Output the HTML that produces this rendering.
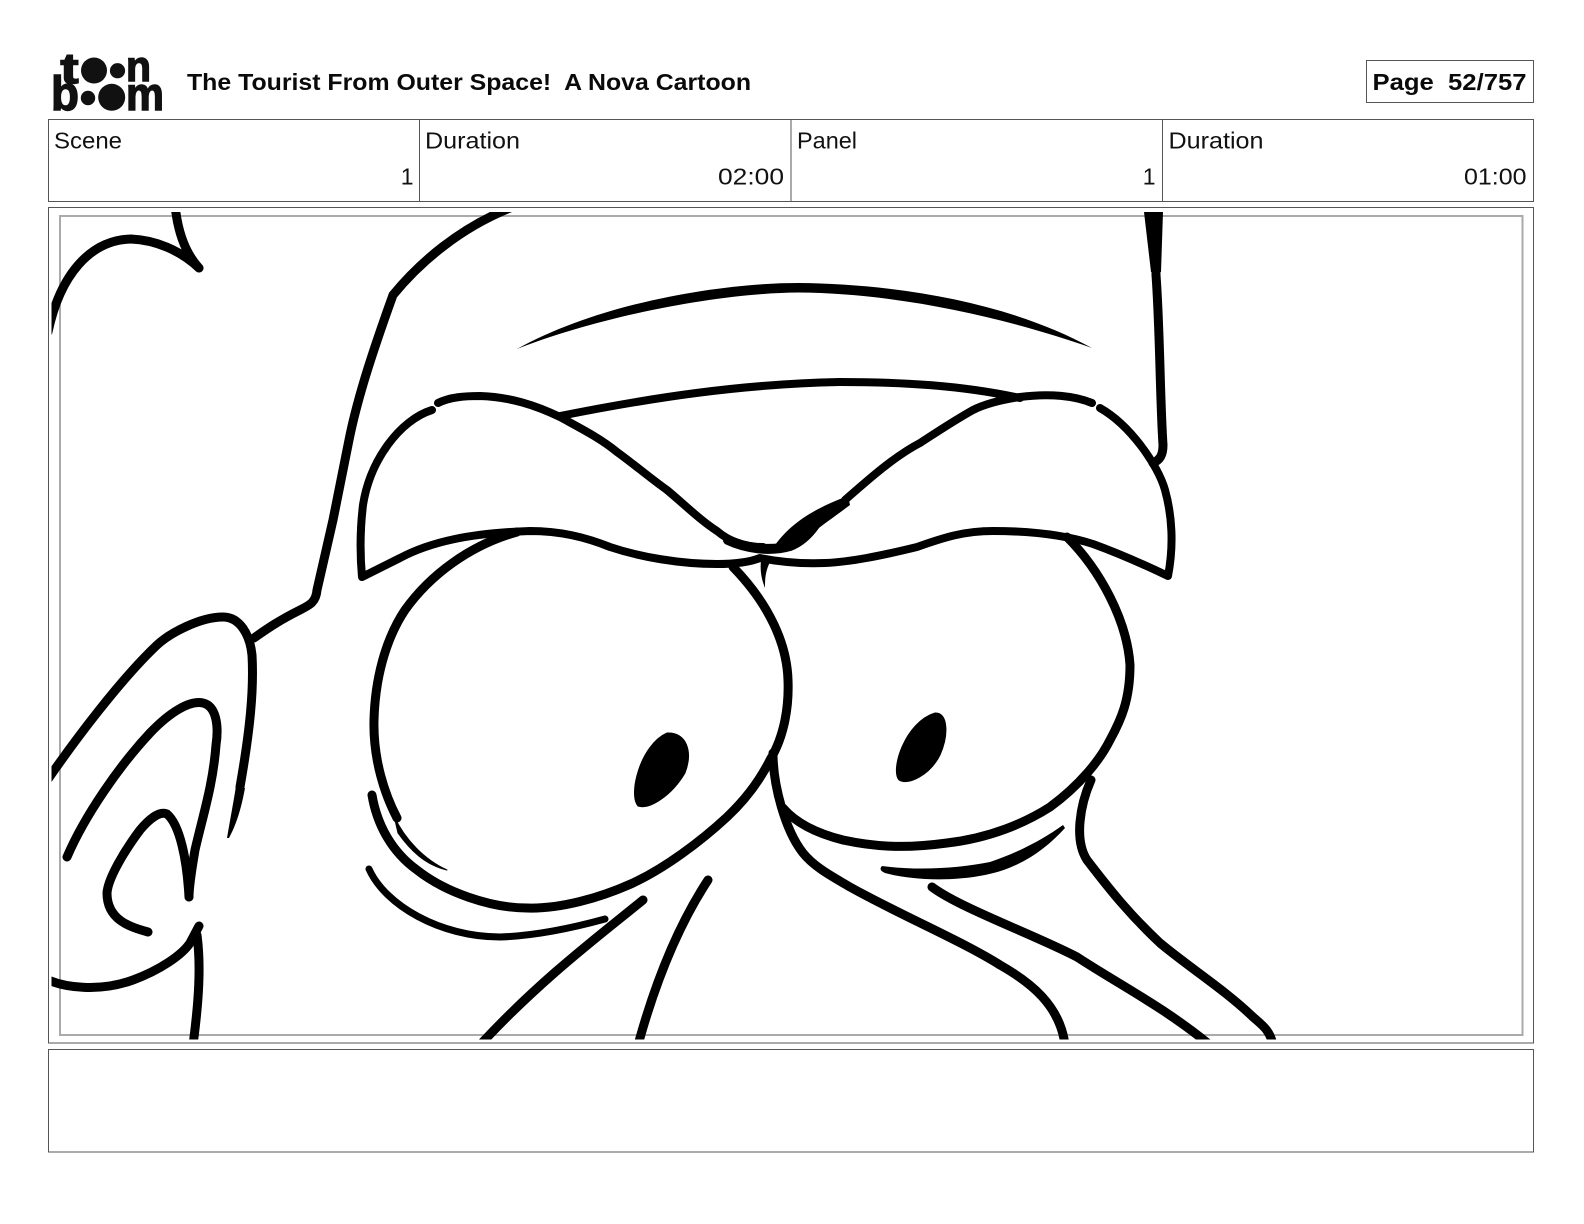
<!DOCTYPE html>
<html><head><meta charset="utf-8"><title>The Tourist From Outer Space! A Nova Cartoon</title>
<style>html,body{margin:0;padding:0;background:#fff}svg{display:block}text{font-family:"Liberation Sans",sans-serif;fill:#111}</style></head>
<body>
<svg width="1584" height="1224" viewBox="0 0 1584 1224" xmlns="http://www.w3.org/2000/svg">
<defs><clipPath id="c"><rect x="51.5" y="212" width="1470" height="827.5"/></clipPath></defs>
<rect width="1584" height="1224" fill="#fff"/>
<!-- logo -->
<g fill="#111" stroke="#111">
<text x="60.5" y="83" font-size="43" font-weight="700" stroke-width="1.6" stroke="#111" textLength="18" lengthAdjust="spacingAndGlyphs">t</text>
<text x="126" y="81" font-size="43" font-weight="700" stroke-width="1.4" stroke="#111" textLength="25" lengthAdjust="spacingAndGlyphs">n</text>
<text x="51" y="110" font-size="48" font-weight="700" stroke-width="1.4" stroke="#111" textLength="28" lengthAdjust="spacingAndGlyphs">b</text>
<text x="126" y="110" font-size="46" font-weight="700" stroke-width="1.4" stroke="#111" textLength="38" lengthAdjust="spacingAndGlyphs">m</text>
<circle cx="94" cy="70.5" r="13" stroke="none"/><circle cx="117.5" cy="70.7" r="7.6" stroke="none"/>
<circle cx="88" cy="98" r="7.2" stroke="none"/><circle cx="111.7" cy="97.3" r="13.5" stroke="none"/>
</g>
<!-- title -->
<text x="187" y="90" font-size="23" font-weight="700" textLength="564" lengthAdjust="spacingAndGlyphs" xml:space="preserve" style="fill:#0a0a0a">The Tourist From Outer Space!  A Nova Cartoon</text>
<rect x="1366.5" y="60.5" width="167" height="42" fill="none" stroke="#555"/>
<text x="1372.5" y="90" font-size="23" font-weight="700" textLength="154" lengthAdjust="spacingAndGlyphs" xml:space="preserve" style="fill:#0a0a0a">Page  52/757</text>
<!-- info -->
<g fill="none" stroke="#555">
<rect x="48.5" y="119.5" width="1485" height="82"/>
<path d="M419.5 119.5V201.5M791 119.5V201.5M1162.5 119.5V201.5"/>
<rect x="48.5" y="207.5" width="1485" height="835.5"/>
<rect x="48.5" y="1049.5" width="1485" height="102.5"/>
<rect x="60" y="216" width="1462.5" height="819" stroke="#aaa" stroke-width="2"/>
</g>
<g font-size="23">
<text x="54" y="148.5" textLength="68" lengthAdjust="spacingAndGlyphs">Scene</text>
<text x="425" y="148.5" textLength="95" lengthAdjust="spacingAndGlyphs">Duration</text>
<text x="797" y="148.5" textLength="60" lengthAdjust="spacingAndGlyphs">Panel</text>
<text x="1168.5" y="148.5" textLength="95" lengthAdjust="spacingAndGlyphs">Duration</text>
<text x="413.5" y="184.5" text-anchor="end">1</text>
<text x="718" y="184.5" textLength="66" lengthAdjust="spacingAndGlyphs">02:00</text>
<text x="1155.5" y="184.5" text-anchor="end">1</text>
<text x="1464" y="184.5" textLength="62.5" lengthAdjust="spacingAndGlyphs">01:00</text>
</g>
<!-- drawing -->
<g clip-path="url(#c)" fill="none" stroke="#000" stroke-width="9" stroke-linecap="round" stroke-linejoin="round">
<!-- hair -->
<path d="M48 332C60 275 90 240 131 239C155 240 180 250 199 268"/>
<path d="M175 205C178 235 187 255 199 268"/>
<!-- head -->
<path d="M510 208C460 228 420 262 393 295C375 345 358 395 349 440L333 520L317 590C316 602 310 605 300 610C280 620 268 628 254 638"/>
<!-- ear -->
<path d="M46 782C75 740 120 680 157 645C170 633 200 617 223 617C240 617 250 635 252 655C254 690 250 730 240 787"/>
<path d="M236 786L245 788C241 810 236 825 229 838L227 838C230 820 233 805 236 786Z" fill="#000" stroke="none"/>
<path d="M67 857C85 815 120 765 150 733C170 712 190 700 203 703C216 706 219 725 216 745C213 785 203 815 195 850C192 868 189 885 189 897"/>
<path d="M148 932C130 927 107 920 107 893C108 878 125 850 140 830C150 818 160 811 167 814C180 825 187 860 189 897"/>
<path d="M46 979C65 988 100 992 133 980C160 970 182 955 190 943L199 926"/>
<path d="M197 935C201 965 199 1000 193 1045"/>
<!-- brow band -->
<path d="M517 349C600 303 720 283 798 283C900 284 1010 303 1092 348C1010 319 900 293 798 292.5C720 293 600 316 517 349Z" fill="#000" stroke="none"/>
<path d="M560 416C650 398 740 384 840 382C900 382 960 385 1020 398" stroke-width="8"/>
<!-- brows -->
<path d="M432 410C400 420 370 460 363 505C360 530 360 555 362 577L400 558C430 542 470 533 530 531C560 531 585 537 610 547C640 557 680 564 717 564C735 564 750 562 760 558C780 562 800 564 825 563C850 562 880 556 917 547C945 537 965 531 993 531C1030 531 1065 535 1093 544C1115 552 1145 565 1168 576C1174 545 1172 515 1165 490C1158 465 1130 425 1100 408" stroke-width="8"/>
<path d="M438 403C450 397 465 396 480 396C510 397 535 405 560 417C580 428 600 438 617 452C635 465 650 478 667 490C685 505 700 520 717 531C730 542 745 547 763 547" stroke-width="8"/>
<path d="M1092 403C1075 396 1050 393 1020 397C1000 400 985 404 973 410C955 420 940 430 920 443C895 456 870 478 845 500" stroke-width="8"/>
<path d="M728 540C745 548 770 552 790 546C800 542 808 535 815 525" stroke-width="10"/>
<path d="M775 545C790 525 810 510 848 496L850 505C830 520 815 530 805 540C795 552 770 552 775 545Z" fill="#000" stroke="none"/>
<path d="M761 560L770 562C765 572 765 580 765 588C761 578 760 570 761 560Z" fill="#000" stroke="none"/>
<!-- head right -->
<path d="M1154 208C1155 240 1156 260 1156 275C1160 330 1160 400 1163 445C1163 455 1160 460 1153 463"/>
<path d="M1144 212L1163 212L1161 272L1151 272Z" fill="#000" stroke="none"/>
<!-- left eye -->
<path d="M517 532C470 545 430 575 405 610C385 640 375 680 374 720C373 760 385 795 397 818"/>
<path d="M394 816C405 840 425 860 447 870C425 865 410 850 398 833Z" fill="#000" stroke="#000" stroke-width="1"/>
<path d="M372 795C377 825 392 852 417 870C445 892 490 908 527 908C560 909 600 898 633 883C665 868 700 842 727 817C745 800 760 780 770 760C785 735 789 705 788 680C787 645 770 605 733 567"/>
<!-- right eye -->
<path d="M1067 537C1100 570 1127 620 1130 665C1130 700 1121 720 1110 740C1100 760 1080 785 1050 807C1025 823 990 838 947 843C910 848 880 848 843 840C815 833 795 822 783 808"/>
<!-- pupils -->
<path d="M667 733C687 732 693 752 685 773C672 795 650 810 638 806C628 795 640 745 667 733Z" fill="#000" stroke-width="1"/>
<path d="M935 713C948 712 949 735 940 755C930 775 908 786 899 780C890 770 905 722 935 713Z" fill="#000" stroke-width="1"/>
<!-- lower creases -->
<path d="M369 869C385 905 440 937 500 937C530 936 565 930 605 919" stroke-width="7"/>
<path d="M643 900C600 935 540 980 480 1045"/>
<path d="M708 880C685 915 660 965 638 1045"/>
<path d="M773 753C773 785 785 830 803 853C815 868 835 878 850 887C900 915 960 940 1000 965C1030 982 1060 1005 1065 1045"/>
<path d="M882 866C920 871 960 868 990 862C1020 852 1045 838 1063 825L1065 828C1045 850 1020 868 985 875C950 882 910 880 885 873Q878 870 882 866Z" fill="#000" stroke="none"/>
<path d="M932 887C960 908 1035 935 1077 957C1120 985 1165 1008 1210 1045"/>
<path d="M1091 780C1080 805 1074 840 1087 860C1110 890 1130 915 1160 943C1190 968 1225 990 1253 1017C1262 1025 1270 1030 1273 1045"/>
</g>
</svg>
</body></html>
